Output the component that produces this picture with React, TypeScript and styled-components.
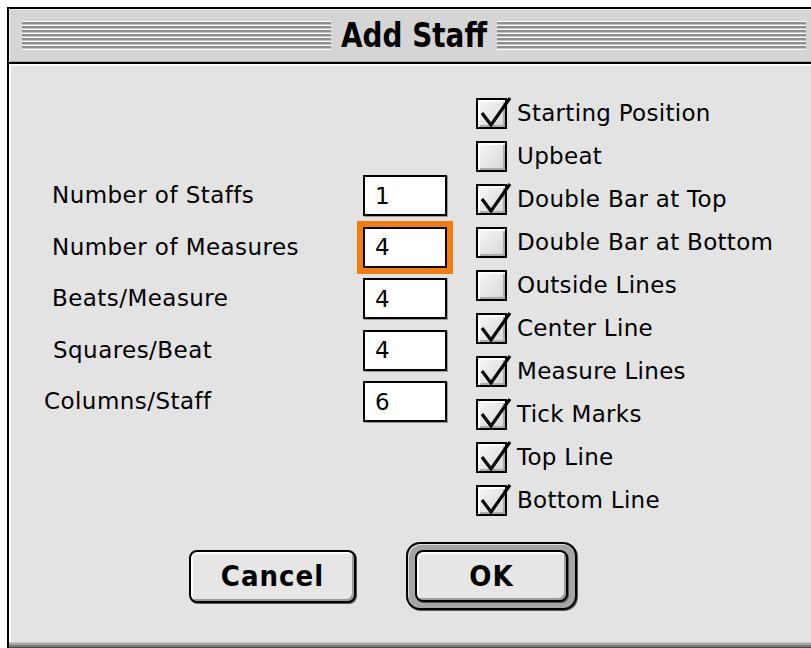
import styled, { createGlobalStyle } from "styled-components";

const GlobalStyle = createGlobalStyle`
  html, body {
    margin: 0;
    padding: 0;
    background: #fff;
    overflow: hidden;
  }
  body {
    font-family: "DejaVu Sans", Verdana, sans-serif;
    color: #000;
  }
`;

type FieldRow = { label: string; value: string; indent: number; focused?: boolean };
type CheckRow = { label: string; checked: boolean };

const fields: FieldRow[] = [
  { label: "Number of Staffs", value: "1", indent: 8 },
  { label: "Number of Measures", value: "4", indent: 8, focused: true },
  { label: "Beats/Measure", value: "4", indent: 8 },
  { label: "Squares/Beat", value: "4", indent: 9 },
  { label: "Columns/Staff", value: "6", indent: 0 },
];

const options: CheckRow[] = [
  { label: "Starting Position", checked: true },
  { label: "Upbeat", checked: false },
  { label: "Double Bar at Top", checked: true },
  { label: "Double Bar at Bottom", checked: false },
  { label: "Outside Lines", checked: false },
  { label: "Center Line", checked: true },
  { label: "Measure Lines", checked: true },
  { label: "Tick Marks", checked: true },
  { label: "Top Line", checked: true },
  { label: "Bottom Line", checked: true },
];

const CheckMark = () => (
  <CheckSvg width="38" height="34" viewBox="0 0 38 34">
    <path d="M6 16 L15 28 L34 1" fill="none" stroke="#000" strokeWidth="3.2" strokeLinejoin="miter" />
  </CheckSvg>
);

export default function App() {
  return (
    <>
      <GlobalStyle />
      <Window>
        {/* title bar */}
        <TitleBar>
          <Grip />
          <Title>Add Staff</Title>
          <Grip />
        </TitleBar>

        <Content>
          <MainRow>
            {/* numeric settings */}
            <Form>
              {fields.map((f) => (
                <FormRow key={f.label}>
                  <Label $indent={f.indent}>{f.label}</Label>
                  <Field $focused={f.focused}>{f.value}</Field>
                </FormRow>
              ))}
            </Form>

            {/* staff options */}
            <CheckList>
              {options.map((o) => (
                <CheckItem key={o.label}>
                  <Box>{o.checked && <CheckMark />}</Box>
                  <CheckLabel>{o.label}</CheckLabel>
                </CheckItem>
              ))}
            </CheckList>
          </MainRow>

          <ButtonRow>
            <Button>Cancel</Button>
            <DefaultRing>
              <Button $narrow>OK</Button>
            </DefaultRing>
          </ButtonRow>
        </Content>
        <BottomEdge />
      </Window>
    </>
  );
}

// window frame
const Window = styled.div`
  margin: 7px 0 0 7px;
  width: 814px;
  height: 660px;
  border: 2px solid #000;
  box-sizing: border-box;
  display: flex;
  flex-direction: column;
  background: #e3e3e3;
`;

const TitleBar = styled.div`
  height: 53px;
  flex: none;
  display: flex;
  align-items: center;
  gap: 8px;
  padding: 0 13px;
  background: #d5d5d5;
  border-bottom: 2px solid #000;
  box-shadow: inset 1px 1px 0 #eeeeee, inset -1px -1px 0 #a8a8a8;
`;

const Grip = styled.div`
  flex: 1;
  height: 29px;
  background: repeating-linear-gradient(
    to bottom,
    #ffffff 0 1px,
    #8e8e8e 1px 3px,
    #c4c4c4 3px 4px
  );
`;

const Title = styled.div`
  font-family: "DejaVu Sans Condensed", "DejaVu Sans", sans-serif;
  font-weight: bold;
  font-size: 31px;
  line-height: 1;
  padding: 0 2px;
  transform: scaleY(1.1);
`;

const Content = styled.div`
  height: 578px;
  flex: none;
  display: flex;
  flex-direction: column;
  box-shadow: inset 2px 2px 0 #fbfbfb;
`;

const MainRow = styled.div`
  display: flex;
  align-items: flex-start;
`;

// left column: labels with text fields
const Form = styled.div`
  margin: 111px 0 0 35px;
  display: flex;
  flex-direction: column;
  gap: 10.5px;
`;

const FormRow = styled.div`
  display: grid;
  grid-template-columns: 319px 84px;
  align-items: center;
  height: 41px;
`;

const Label = styled.div<{ $indent: number }>`
  padding-left: ${(p) => p.$indent}px;
  font-size: 23px;
  letter-spacing: 0.45px;
  line-height: 1;
`;

const Field = styled.div<{ $focused?: boolean }>`
  box-sizing: border-box;
  height: 41px;
  border: 2px solid #000;
  background: #fff;
  display: flex;
  align-items: center;
  padding-left: 10px;
  font-size: 23px;
  box-shadow: ${(p) => (p.$focused ? "0 0 0 6px #f07d0e" : "1px 1px 0 #9a9a9a")};
`;

// right column: checkboxes
const CheckList = styled.div`
  margin: 34px 0 0 29px;
  display: flex;
  flex-direction: column;
  gap: 12px;
`;

const CheckItem = styled.div`
  display: flex;
  align-items: center;
  gap: 10px;
  height: 31px;
`;

const Box = styled.div`
  position: relative;
  box-sizing: border-box;
  width: 31px;
  height: 31px;
  border: 2px solid #000;
  background: linear-gradient(135deg, #f8f8f8, #d6d6d6);
  box-shadow: inset 2px 2px 0 #ffffff, inset -2px -2px 0 #ababab;
`;

const CheckSvg = styled.svg`
  position: absolute;
  left: -2px;
  top: -3px;
  overflow: visible;
`;

const CheckLabel = styled.div`
  font-size: 23px;
  letter-spacing: 0.3px;
  line-height: 1;
`;

// dialog buttons
const ButtonRow = styled.div`
  display: flex;
  align-items: center;
  gap: 50px;
  margin: 26px 0 0 180px;
`;

const Button = styled.button<{ $narrow?: boolean }>`
  box-sizing: border-box;
  width: ${(p) => (p.$narrow ? 153 : 167)}px;
  height: ${(p) => (p.$narrow ? 52 : 53)}px;
  border: 2px solid #000;
  border-radius: 8px;
  background: #e6e6e6;
  box-shadow: inset 2px 2px 0 #ffffff, inset -2px -2px 0 #9c9c9c, 1px 1px 0 #555;
  font-family: "DejaVu Sans Condensed", "DejaVu Sans", sans-serif;
  font-weight: bold;
  font-size: 29px;
  letter-spacing: 1px;
  color: #000;
  padding: 0;
`;

const DefaultRing = styled.div`
  display: flex;
  padding: 6px 7px;
  border: 2px solid #000;
  border-radius: 14px;
  background: #a4a4a4;
  box-shadow: inset 1px 1px 0 #dcdcdc, 1px 1px 0 #555;
`;

const BottomEdge = styled.div`
  height: 12px;
  flex: none;
  background: linear-gradient(to bottom, #c9c9c9 0 1px, #a6a6a6 1px 3px, #7a7a7a 3px 5px, #4a4a4a 5px);
`;
